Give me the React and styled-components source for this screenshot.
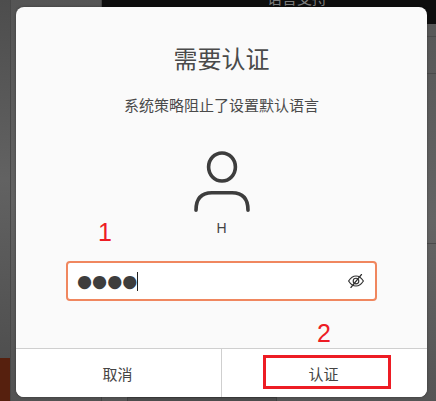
import styled, { createGlobalStyle } from 'styled-components'

const GlobalStyle = createGlobalStyle`
  html, body {
    margin: 0;
    padding: 0;
    background: #555;
  }
  * {
    box-sizing: border-box;
  }
`

export default function App() {
  return (
    <Page>
      <GlobalStyle />
      <Backdrop>
        <Rail>
          <RailFill />
          <RailAccent />
        </Rail>
        <Sidebar />
        <Main>
          <HeaderBar>
            <HeaderTitle>语言支持</HeaderTitle>
          </HeaderBar>
          <Row $height={13} />
          <Row $height={37} />
          <Row $height={170} />
          <LastRow>
            <BottomCard />
          </LastRow>
        </Main>
      </Backdrop>

      <Overlay>
        <Dialog>
          <Body>
            <Title>需要认证</Title>
            <Message>系统策略阻止了设置默认语言</Message>
            <UserIcon viewBox="0 0 56 61" fill="none" stroke="#3d3d3d" strokeWidth="3.6" strokeLinecap="round">
              <ellipse cx="28" cy="16" rx="13.4" ry="14" />
              <path d="M2 59.2 C2 47 8 41.8 18 41.8 H38 C48 41.8 54 47 54 59.2" />
            </UserIcon>
            <UserName>H</UserName>
            <PasswordField>
              <Dots>●●●●</Dots>
              <Caret />
              <EyeIcon viewBox="0 0 16 14" fill="none" stroke="#333" strokeWidth="1.15" strokeLinecap="round">
                <path d="M0.6 7 C3 3.2 5.4 2 8 2 C10.6 2 13 3.2 15.4 7 C13 10.8 10.6 12 8 12 C5.4 12 3 10.8 0.6 7 Z" />
                <circle cx="8" cy="7" r="2.8" />
                <path d="M13.4 0.6 L3 13.4" strokeWidth="1.4" />
              </EyeIcon>
            </PasswordField>
          </Body>
          <Footer>
            <FooterButton>取消</FooterButton>
            <FooterButton>认证</FooterButton>
          </Footer>
          <NumberOne>1</NumberOne>
          <NumberTwo>2</NumberTwo>
          <RedBox />
        </Dialog>
      </Overlay>
    </Page>
  )
}

const Page = styled.div`
  position: relative;
  width: 436px;
  height: 401px;
  overflow: hidden;
  font-family: "Noto Sans CJK SC", "Noto Sans", sans-serif;
`

const Backdrop = styled.div`
  display: grid;
  grid-template-columns: 10px 91px 1fr;
  height: 100%;
`

const Rail = styled.div`
  display: flex;
  flex-direction: column;
`

const RailFill = styled.div`
  flex: 1;
  background: linear-gradient(#4d4d4d, #626262 50%, #4f4f4f);
`

const RailAccent = styled.div`
  height: 43px;
  background: #56200e;
`

const Sidebar = styled.div`
  border-left: 1px solid #484848;
  background: linear-gradient(#555, #636363 50%, #525252);
`

const Main = styled.div`
  display: flex;
  flex-direction: column;
  background: linear-gradient(#565656, #646464 55%, #555);
  border-left: 1px solid #444;
`

const HeaderBar = styled.div`
  height: 24px;
  background: #0e0e0e;
  display: flex;
  justify-content: center;
  padding-left: 56px;
  overflow: hidden;
`

const HeaderTitle = styled.div`
  font-size: 15px;
  line-height: 18px;
  margin-top: -11px;
  color: #7d7d7d;
`

const Row = styled.div`
  height: ${props => props.$height}px;
  border-bottom: 1px solid #4a4a4a;
`

const LastRow = styled.div`
  flex: 1;
  display: flex;
  align-items: flex-end;
  padding-left: 25px;
`

const BottomCard = styled.div`
  width: 150px;
  height: 4px;
  background: #4c4c4c;
  border: 1px solid #3f3f3f;
  border-bottom: 0;
`

const Overlay = styled.div`
  position: absolute;
  inset: 0;
  padding: 7px 9px 4px 16px;
  display: flex;
`

const Dialog = styled.div`
  position: relative;
  flex: 1;
  display: flex;
  flex-direction: column;
  border-radius: 8px;
  overflow: hidden;
  background: #fafafa;
  box-shadow: 0 0 3px rgba(0, 0, 0, 0.35);
`

const Body = styled.div`
  flex: 1;
  display: flex;
  flex-direction: column;
  align-items: center;
  padding: 35px 50px 0;
  color: #3d3d3d;
`

const Title = styled.div`
  font-size: 24px;
  line-height: 32px;
  font-weight: 400;
  color: #4a4a4a;
`

const Message = styled.div`
  margin-top: 21px;
  font-size: 15px;
  line-height: 20px;
  color: #4a4a4a;
`

const UserIcon = styled.svg`
  width: 56px;
  height: 61px;
  margin-top: 36px;
  margin-right: -1px;
  flex: none;
`

const UserName = styled.div`
  margin-top: 8px;
  font-family: "Liberation Sans", sans-serif;
  font-size: 14px;
  line-height: 16px;
  color: #444;
`

const PasswordField = styled.div`
  align-self: stretch;
  margin-top: 25px;
  height: 40px;
  display: flex;
  align-items: center;
  padding: 0 11px 0 9px;
  background: #fff;
  border: 2px solid #f0875f;
  border-radius: 4px;
`

const Dots = styled.span`
  font-family: "DejaVu Sans", sans-serif;
  font-size: 17.3px;
  line-height: 36px;
  color: #3d3d3d;
`

const Caret = styled.span`
  width: 1px;
  height: 19px;
  background: #222;
`

const EyeIcon = styled.svg`
  width: 16px;
  height: 14px;
  margin-left: auto;
`

const Footer = styled.div`
  display: grid;
  grid-template-columns: 205px 1fr;
  height: 49px;
  background: #fff;
  border-top: 1px solid #cfcfcf;
`

const FooterButton = styled.div`
  display: flex;
  align-items: center;
  justify-content: center;
  padding-right: 2px;
  font-size: 15px;
  color: #444;

  & + & {
    border-left: 1px solid #cfcfcf;
  }
`

const Annotation = styled.div`
  position: absolute;
  font-family: "Liberation Sans", sans-serif;
  font-size: 25px;
  line-height: 28px;
  color: #ed1c24;
`

const NumberOne = styled(Annotation)`
  left: 82px;
  top: 211px;
`

const NumberTwo = styled(Annotation)`
  left: 301px;
  top: 312px;
`

const RedBox = styled.div`
  position: absolute;
  left: 247px;
  top: 348px;
  width: 128px;
  height: 34px;
  border: 3px solid #ed1c24;
`
